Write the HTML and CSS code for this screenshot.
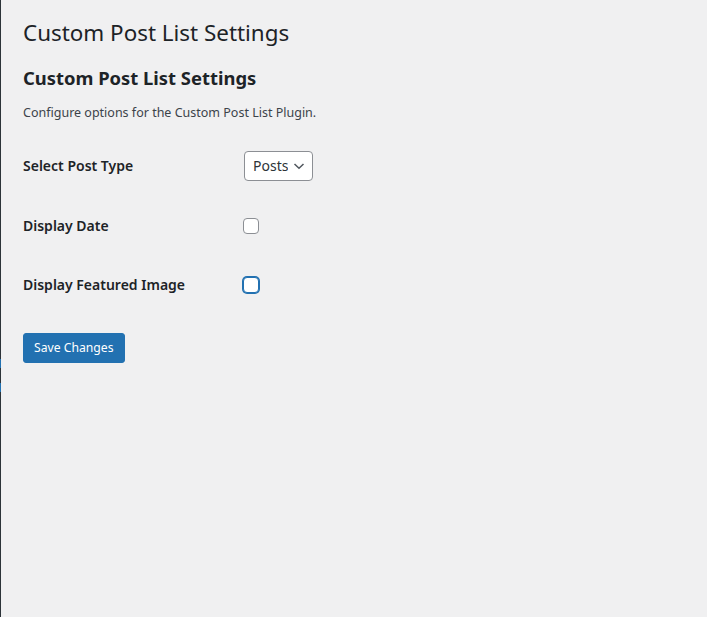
FILE: index.html
```html
<!DOCTYPE html>
<html lang="en">
<head>
<meta charset="utf-8">
<title>Custom Post List Settings</title>
<link rel="stylesheet" href="styles.css">
</head>
<body>
<div class="layout">
  <aside class="sidebar-edge"></aside>
  <main class="wrap">
    <h1 class="page-title">Custom Post List Settings</h1>
    <form class="settings-form">
      <h2 class="section-title">Custom Post List Settings</h2>
      <p class="section-desc">Configure options for the Custom Post List Plugin.</p>
      <div class="form-table">
        <div class="row">
          <div class="label">Select Post Type</div>
          <div class="field">
            <div class="select-wrap">
              <select class="select"><option>Posts</option></select>
              <svg class="chevron" width="12" height="12" viewBox="0 0 12 12"><path d="M1.5 4 L6 8.3 L10.5 4" fill="none" stroke="#50575e" stroke-width="1.5"/></svg>
            </div>
          </div>
        </div>
        <div class="row row-mid">
          <div class="label">Display Date</div>
          <div class="field"><span class="checkbox"></span></div>
        </div>
        <div class="row">
          <div class="label">Display Featured Image</div>
          <div class="field"><span class="checkbox focused"></span></div>
        </div>
      </div>
      <div class="submit"><button type="button" class="button-primary">Save Changes</button></div>
    </form>
  </main>
</div>
</body>
</html>
```
FILE: styles.css
```css
html, body {
  margin: 0;
  padding: 0;
  background: #f0f0f1;
  height: 100%;
}
body {
  font-family: "Noto Sans", "Open Sans", sans-serif;
  color: #1d2327;
  font-size: 13px;
}
.layout {
  display: flex;
  min-height: 100%;
}
.sidebar-edge {
  width: 1px;
  flex: 0 0 1px;
  background: linear-gradient(to bottom,
    #2c3338 0, #2c3338 359px,
    #2271b1 359px, #2271b1 368px,
    #2c3338 368px, #2c3338 383px,
    #2271b1 383px, #2271b1 392px,
    #2c3338 392px);
}
.wrap {
  flex: 1;
  padding: 0 20px 0 22px;
}
.page-title {
  font-size: 22.4px;
  font-weight: 400;
  line-height: 30px;
  margin: 0;
  padding: 18px 0 0;
}
.section-title {
  font-size: 18.4px;
  font-weight: 700;
  line-height: 22px;
  margin: 19px 0 0;
}
.section-desc {
  font-size: 12.5px;
  margin: 14px 0 0;
  line-height: 20px;
  color: #3c434a;
}
.form-table {
  margin-top: 13px;
}
.row {
  display: flex;
  align-items: center;
  padding: 15px 0;
  min-height: 30px;
}
.row-mid {
  padding-bottom: 14px;
}
.label {
  width: 220px;
  font-size: 14px;
  font-weight: 600;
  line-height: 20px;
}
.field {
  display: flex;
  align-items: center;
}
.select-wrap {
  position: relative;
  display: inline-block;
  margin-left: 1px;
}
.select {
  display: block;
  appearance: none;
  -webkit-appearance: none;
  font-family: inherit;
  font-size: 14px;
  color: #2c3338;
  background: #fff;
  border: 1px solid #8c8f94;
  border-radius: 4px;
  height: 30px;
  width: 69px;
  padding: 0 24px 0 8px;
  line-height: 28px;
  margin: 0;
}
.chevron {
  position: absolute;
  right: 8px;
  top: 9px;
  pointer-events: none;
}
.checkbox {
  display: block;
  box-sizing: border-box;
  width: 16px;
  height: 16px;
  border: 1px solid #8c8f94;
  border-radius: 4px;
  background: #fff;
}
.checkbox.focused {
  border-color: #2271b1;
  box-shadow: 0 0 0 1px #2271b1;
}
.submit {
  margin-top: 18px;
}
.button-primary {
  display: block;
  font-family: inherit;
  font-size: 12.2px;
  background: #2271b1;
  color: #fff;
  border: 1px solid #2271b1;
  border-radius: 3px;
  height: 30px;
  padding: 0 10px;
  line-height: 28px;
  cursor: pointer;
}
```
